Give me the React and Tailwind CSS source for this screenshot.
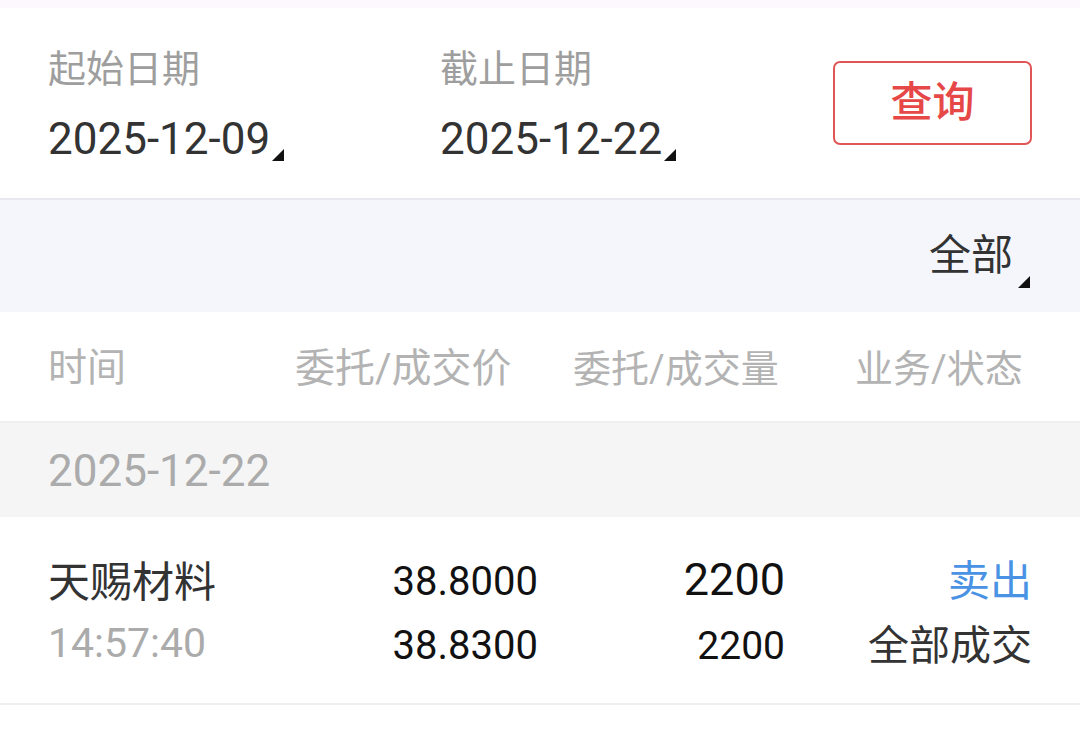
import React from "react";

const FONT = { fontFamily: "Roboto, 'Noto Sans CJK SC', sans-serif" };

function Corner({ className = "" }) {
  // small black right-angle marker (dropdown hint)
  return (
    <span
      className={`inline-block w-0 h-0 border-l-[12px] border-l-transparent border-b-[12px] border-b-[#111111] ${className}`}
    />
  );
}

export default function App() {
  return (
    <div className="w-[1080px] h-[739px] bg-white overflow-hidden" style={FONT}>
      {/* status strip */}
      <div className="h-[8px] bg-[#fdf8fd]" />

      {/* ===== date filter ===== */}
      <div className="h-[192px] flex items-start px-[48px] border-b-2 border-[#e8e9f0]">
        <div className="w-[392px] pt-[42px] flex flex-col">
          <div className="text-[38px] leading-none text-[#9e9e9e]">起始日期</div>
          <div className="mt-[29px] flex items-end">
            <span className="text-[44px] leading-none text-[#333333]">2025-12-09</span>
            <Corner className="ml-[2px]" />
          </div>
        </div>
        <div className="w-[393px] pt-[42px] flex flex-col">
          <div className="text-[38px] leading-none text-[#9e9e9e]">截止日期</div>
          <div className="mt-[29px] flex items-end">
            <span className="text-[44px] leading-none text-[#333333]">2025-12-22</span>
            <Corner className="ml-[2px]" />
          </div>
        </div>
        <button className="mt-[53px] w-[199px] h-[84px] border-2 border-[#e05656] rounded-[7px] flex items-center justify-center text-[42px] leading-none font-medium text-[#e64848]">
          查询
        </button>
      </div>

      {/* ===== type filter ===== */}
      <div className="h-[112px] bg-[#f5f6fc] flex items-center justify-end pr-[50px]">
        <span className="text-[42px] leading-none text-[#333333]">全部</span>
        <Corner className="ml-[5px] self-end mb-[24px]" />
      </div>

      {/* ===== column headers ===== */}
      <div className="h-[111px] flex items-center pt-[4px] px-[48px] border-b-2 border-[#efeff2] leading-none text-[#b3b3b3] whitespace-nowrap">
        <div className="w-[247px] text-[39px]">时间</div>
        <div className="w-[278px] text-[40px]">委托/成交价</div>
        <div className="w-[282px] text-[38px]">委托/成交量</div>
        <div className="w-[170px] text-[38px]">业务/状态</div>
      </div>

      {/* ===== date group ===== */}
      <div className="h-[94px] bg-[#f5f5f5] flex items-center pt-[2px] px-[48px]">
        <span className="text-[44px] leading-none text-[#ababab]">2025-12-22</span>
      </div>

      {/* ===== record ===== */}
      <div className="h-[188px] flex items-stretch px-[48px] border-b-2 border-[#eeeeee]">
        <div className="w-[242px] flex flex-col justify-center gap-[16px] pt-[6px]">
          <div className="text-[42px] leading-[44px] text-[#333333]">天赐材料</div>
          <div className="text-[41px] leading-[44px] text-[#ababab]">14:57:40</div>
        </div>
        <div className="w-[248px] flex flex-col justify-center items-end gap-[20px] pt-[8px]">
          <div className="text-[40px] leading-[44px] text-[#111111]">38.8000</div>
          <div className="text-[40px] leading-[44px] text-[#111111]">38.8300</div>
        </div>
        <div className="w-[247px] flex flex-col justify-center items-end gap-[22px] pt-[6px]">
          <div className="text-[45px] leading-[44px] text-[#111111]">2200</div>
          <div className="text-[39px] leading-[44px] text-[#111111]">2200</div>
        </div>
        <div className="flex-1 flex flex-col justify-center items-end gap-[20px] pt-[8px]">
          <div className="text-[42px] leading-[44px] text-[#4a92e4]">卖出</div>
          <div className="text-[41px] leading-[44px] text-[#333333]">全部成交</div>
        </div>
      </div>
    </div>
  );
}
